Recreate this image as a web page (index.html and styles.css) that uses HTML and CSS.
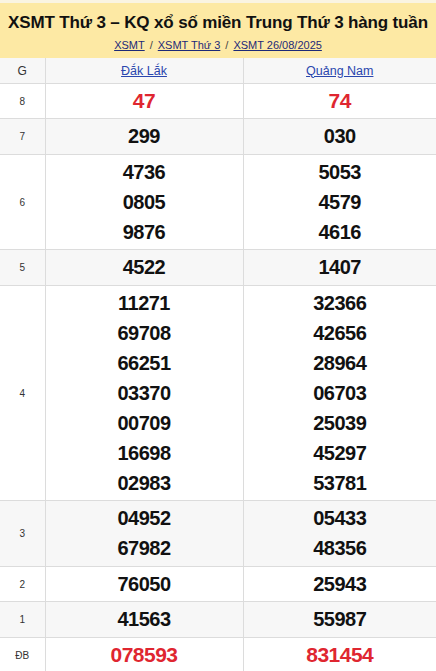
FILE: index.html
```html
<!DOCTYPE html>
<html lang="vi">
<head>
<meta charset="utf-8">
<link rel="stylesheet" href="styles.css">
</head>
<body>
<div class="page">
  <div class="head">
    <h1 class="title">XSMT Thứ 3 – KQ xổ số miền Trung Thứ 3 hàng tuần</h1>
    <div class="crumbs">
      <a href="#">XSMT</a><span class="sep">/</span><a href="#">XSMT Thứ 3</a><span class="sep">/</span><a href="#">XSMT 26/08/2025</a>
    </div>
  </div>
  <table class="kq">
    <colgroup><col class="c1"><col class="c2"><col class="c3"></colgroup>
    <thead>
      <tr><th class="lbl">G</th><th><a href="#">Đắk Lắk</a></th><th><a href="#">Quảng Nam</a></th></tr>
    </thead>
    <tbody>
      <tr><td class="lbl">8</td><td class="num red">47</td><td class="num red">74</td></tr>
      <tr class="alt"><td class="lbl">7</td><td class="num">299</td><td class="num">030</td></tr>
      <tr><td class="lbl">6</td><td class="num"><div>4736</div><div>0805</div><div>9876</div></td><td class="num"><div>5053</div><div>4579</div><div>4616</div></td></tr>
      <tr class="alt"><td class="lbl">5</td><td class="num">4522</td><td class="num">1407</td></tr>
      <tr><td class="lbl">4</td><td class="num"><div>11271</div><div>69708</div><div>66251</div><div>03370</div><div>00709</div><div>16698</div><div>02983</div></td><td class="num"><div>32366</div><div>42656</div><div>28964</div><div>06703</div><div>25039</div><div>45297</div><div>53781</div></td></tr>
      <tr class="alt"><td class="lbl">3</td><td class="num"><div>04952</div><div>67982</div></td><td class="num"><div>05433</div><div>48356</div></td></tr>
      <tr><td class="lbl">2</td><td class="num">76050</td><td class="num">25943</td></tr>
      <tr class="alt"><td class="lbl">1</td><td class="num">41563</td><td class="num">55987</td></tr>
      <tr><td class="lbl">ĐB</td><td class="num red">078593</td><td class="num red">831454</td></tr>
    </tbody>
  </table>
</div>
</body>
</html>
```

FILE: styles.css
```css
html, body {
  margin: 0;
  padding: 0;
  background: #fff;
}
body {
  font-family: "Liberation Sans", Arial, sans-serif;
  color: #111;
}
.page {
  border-top: 3px solid #faf4e2;
}
.head {
  background: #fde9a4;
  height: 55px;
  box-sizing: border-box;
  padding-top: 10px;
  text-align: center;
}
.title {
  margin: 0;
  font-size: 17px;
  line-height: 20px;
  font-weight: bold;
  color: #111;
  letter-spacing: -0.15px;
}
.crumbs {
  margin-top: 5px;
  font-size: 11px;
  line-height: 14px;
  color: #444;
}
.crumbs a {
  color: #1d2a78;
  text-decoration: underline;
}
.crumbs .sep {
  margin: 0 5px;
}
.kq {
  width: 100%;
  border-collapse: collapse;
  table-layout: fixed;
}
.c1 { width: 45px; }
.c2 { width: 198px; }
.kq th, .kq td {
  border-bottom: 1px solid #dcdcdc;
  border-left: 1px solid #dcdcdc;
  text-align: center;
  vertical-align: middle;
  padding: 0;
}
.kq th:first-child, .kq td:first-child {
  border-left: none;
}
.kq thead tr {
  background: #f7f7f7;
}
.kq th {
  height: 25px;
  font-weight: normal;
  font-size: 12px;
  color: #333;
}
.kq th a {
  color: #2a46ae;
  text-decoration: underline;
  font-size: 12.5px;
}
.kq tr.alt {
  background: #f7f7f7;
}
.lbl {
  font-size: 10px;
  color: #333;
}
.kq .num {
  font-size: 20px;
  font-weight: bold;
  line-height: 30px;
  padding: 2px 0 2px 0;
  letter-spacing: -0.5px;
  color: #111;
}
.kq tr.alt .num {
  padding-bottom: 3px;
}
.kq .num.red {
  color: #df2630;
  font-size: 21px;
}
```
